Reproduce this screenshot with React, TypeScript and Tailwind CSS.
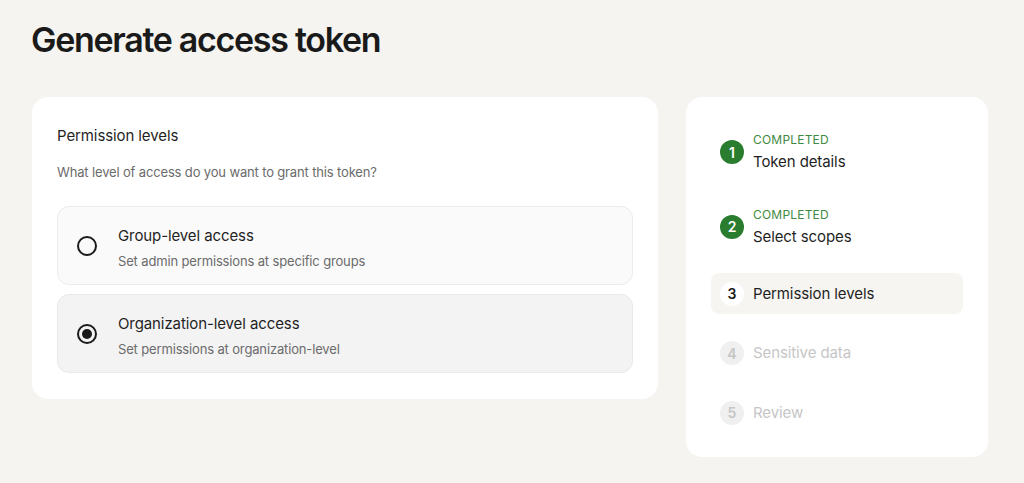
import React from "react";

function Radio({ checked }: { checked: boolean }) {
  return (
    <div className="flex h-5 w-5 shrink-0 items-center justify-center rounded-full border-2 border-[#1a1a1a]">
      {checked && <div className="h-[10px] w-[10px] rounded-full bg-[#1a1a1a]" />}
    </div>
  );
}

function Option({
  title,
  desc,
  checked,
}: {
  title: string;
  desc: string;
  checked: boolean;
}) {
  return (
    <div
      className={
        checked
          ? "flex h-[79px] items-center gap-[21px] rounded-[12px] border border-[#e9e9e9] bg-[#f3f3f3] px-[19px]"
          : "flex h-[79px] items-center gap-[21px] rounded-[12px] border border-[#ececec] bg-[#fafafa] px-[19px]"
      }
    >
      <Radio checked={checked} />
      <div className="flex flex-col gap-[6px] pt-[4px]">
        <div className="text-[15px] leading-[20px] tracking-[-0.1px] text-[#1f1f1f]">{title}</div>
        <div className="text-[13px] leading-[18px] tracking-[-0.15px] text-[#6b6b6b]">{desc}</div>
      </div>
    </div>
  );
}

type Step = { n: number; label: string; state: "done" | "current" | "todo" };

function StepRow({ s }: { s: Step }) {
  if (s.state === "done") {
    return (
      <div className="flex h-[56px] items-center gap-[9px] px-[9px]">
        <div className="flex h-6 w-6 items-center justify-center rounded-full bg-[#2a7d2e] text-[14px] font-semibold text-white">
          {s.n}
        </div>
        <div className="flex flex-col gap-[4px]">
          <div className="text-[12px] leading-[16px] tracking-[0.2px] text-[#3f8a42]">COMPLETED</div>
          <div className="text-[15px] leading-[20px] tracking-[-0.1px] text-[#1f1f1f]">{s.label}</div>
        </div>
      </div>
    );
  }
  if (s.state === "current") {
    return (
      <div className="flex h-[41px] items-center gap-[9px] rounded-[8px] bg-[#f6f5f1] px-[9px]">
        <div className="flex h-6 w-6 items-center justify-center rounded-full bg-white text-[14px] font-semibold text-[#1a1a1a]">
          {s.n}
        </div>
        <div className="text-[15px] leading-[20px] tracking-[-0.1px] text-[#1f1f1f]">{s.label}</div>
      </div>
    );
  }
  return (
    <div className="flex h-[41px] items-center gap-[9px] px-[9px]">
      <div className="flex h-6 w-6 items-center justify-center rounded-full bg-[#f0f0f0] text-[14px] font-semibold text-[#c6c6c6]">
        {s.n}
      </div>
      <div className="text-[15px] leading-[20px] tracking-[-0.1px] text-[#c6c6c6]">{s.label}</div>
    </div>
  );
}

export default function App() {
  const steps: Step[] = [
    { n: 1, label: "Token details", state: "done" },
    { n: 2, label: "Select scopes", state: "done" },
    { n: 3, label: "Permission levels", state: "current" },
    { n: 4, label: "Sensitive data", state: "todo" },
    { n: 5, label: "Review", state: "todo" },
  ];
  return (
    <div
      className="min-h-[483px] w-full bg-[#f5f4f0] px-8 pt-5"
      style={{ fontFamily: "Inter, 'Noto Sans', sans-serif" }}
    >
      <h1 className="-ml-px text-[34px] font-semibold leading-[40px] tracking-[-1.3px] text-[#1a1a1a]">
        Generate access token
      </h1>
      <div className="mt-[37px] flex items-start gap-[28px]">
        <div className="w-[626px] rounded-[16px] bg-white px-[25px] pb-[26px] pt-[29px]">
          <div className="text-[15px] leading-[20px] tracking-[-0.1px] text-[#1f1f1f]">Permission levels</div>
          <div className="mt-[17px] text-[13px] leading-[18px] tracking-[-0.15px] text-[#6b6b6b]">
            What level of access do you want to grant this token?
          </div>
          <div className="mt-[25px] flex flex-col gap-[9px]">
            <Option
              title="Group-level access"
              desc="Set admin permissions at specific groups"
              checked={false}
            />
            <Option
              title="Organization-level access"
              desc="Set permissions at organization-level"
              checked={true}
            />
          </div>
        </div>
        <div className="flex h-[360px] w-[302px] flex-col gap-[18.5px] rounded-[16px] bg-white px-[25px] pt-[27px]">
          {steps.map((s) => (
            <StepRow key={s.n} s={s} />
          ))}
        </div>
      </div>
    </div>
  );
}
